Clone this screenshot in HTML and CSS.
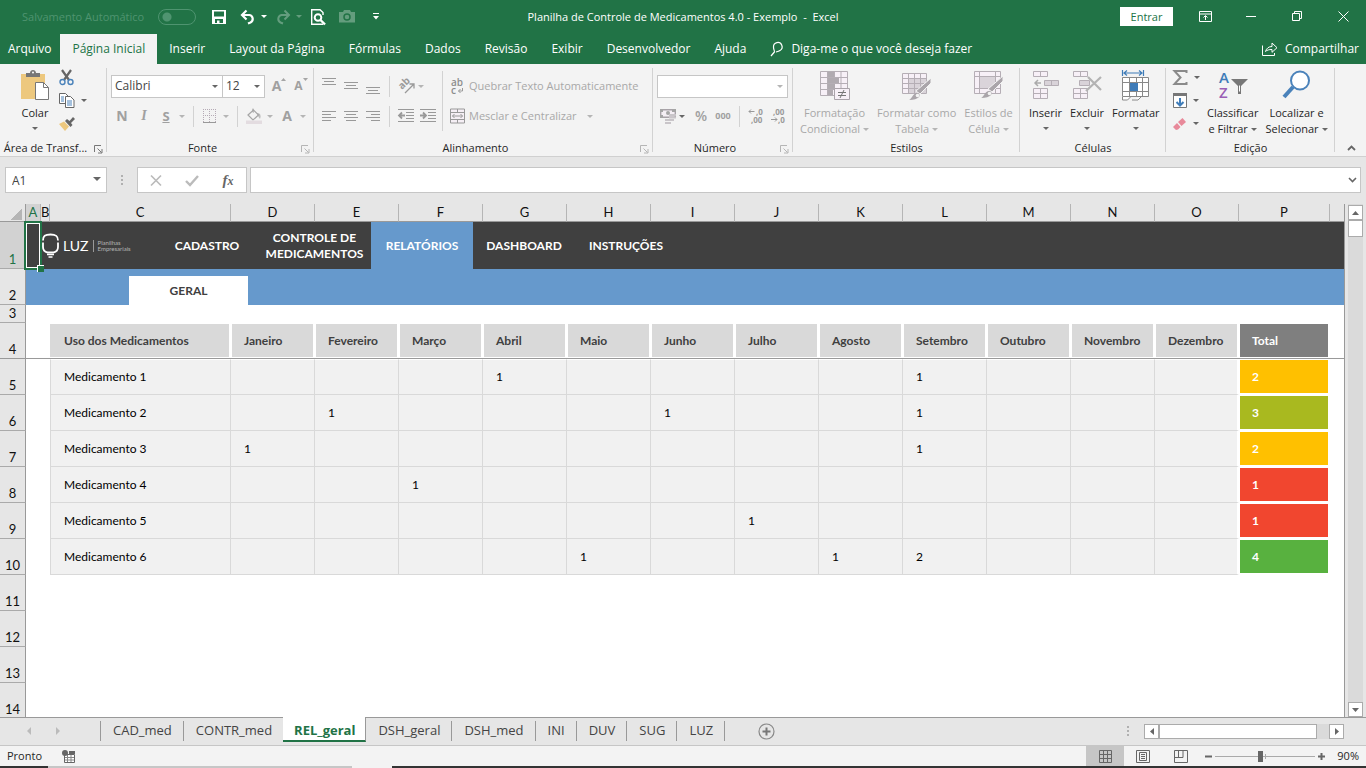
FILE: index.html
```html
<!DOCTYPE html>
<html lang="pt-BR">
<head>
  <meta charset="UTF-8">
  <meta name="viewport" content="width=device-width, initial-scale=1.0">
  <title>Planilha de Controle de Medicamentos 4.0</title>
  <link rel="stylesheet" href="styles.css">
</head>
<body>
  <header class="titlebar">
    <div class="quick">
      <label class="autosave" for="autosave">Salvamento Automático</label>
      <input class="switch" type="checkbox" id="autosave" disabled>
      <button class="q-btn" aria-label="Salvar"><svg width="14" height="14" viewBox="0 0 14 14"><path d="M0 0h14v14H0z" fill="#fff"/><path d="M2 1.500h10v5H2zM3 9h8v4H3z" fill="#217346"/><path d="M5 10.500h2.500V14H5z" fill="#fff"/></svg></button>
      <button class="q-btn" aria-label="Desfazer"><svg width="16" height="14" viewBox="0 0 16 14"><path d="M2 5h7.500a4 4 0 0 1 1 7.500L8 13.500M6.500 0.500L2 5l4.500 4.500" fill="none" stroke="#fff" stroke-width="2.200"/></svg></button>
      <span class="caret white"></span>
      <button class="q-btn dim" aria-label="Refazer"><svg width="16" height="14" viewBox="0 0 16 14"><path d="M14 5H6.500a4 4 0 0 0-1 7.500L8 13.500M9.500 0.500L14 5L9.500 9.500" fill="none" stroke="#fff" stroke-width="2"/></svg></button>
      <span class="caret white dim"></span>
      <button class="q-btn" aria-label="Visualizar impressão"><svg width="15" height="16" viewBox="0 0 15 16"><path d="M12 6V3.500L9 .7H.7v14.600H12" fill="none" stroke="#fff" stroke-width="1.400"/><circle cx="7" cy="8.500" r="3.300" fill="none" stroke="#fff" stroke-width="2"/><path d="M9.500 11l4.500 4.500" stroke="#fff" stroke-width="2.400"/></svg></button>
      <button class="q-btn dim" aria-label="Câmera"><svg width="16" height="13" viewBox="0 0 16 13"><path d="M0 2h4l1-2h6l1 2h4v10.500H0z" fill="#fff"/><circle cx="8" cy="7" r="3" fill="none" stroke="#217346" stroke-width="1.500"/></svg></button>
      <button class="q-btn" aria-label="Personalizar"><svg width="6" height="7" viewBox="0 0 6 7"><path d="M0 .5h6" stroke="#fff"/><path d="M0 3h6L3 6.500z" fill="#fff"/></svg></button>
    </div>
    <h1 class="doc-title">Planilha de Controle de Medicamentos 4.0 - Exemplo&nbsp; -&nbsp; Excel</h1>
    <div class="window">
      <button class="signin">Entrar</button>
      <button class="w-btn" aria-label="Opções da faixa"><svg width="13" height="11" viewBox="0 0 13 11"><path d="M.5 .5h12v10H.5zM.5 3h12M6.500 9V5M4.500 6.500l2-2 2 2" fill="none" stroke="#fff"/></svg></button>
      <button class="w-btn" aria-label="Minimizar"><svg width="11" height="11" viewBox="0 0 11 11"><path d="M0 5.500h10" stroke="#fff"/></svg></button>
      <button class="w-btn" aria-label="Restaurar"><svg width="11" height="11" viewBox="0 0 11 11"><path d="M.5 2.500h7v7h-7zM2.500 2.500v-2h7v7h-2" fill="none" stroke="#fff"/></svg></button>
      <button class="w-btn" aria-label="Fechar"><svg width="11" height="11" viewBox="0 0 11 11"><path d="M.5 .5l10 10M10.500 .5l-10 10" stroke="#fff"/></svg></button>
    </div>
  </header>

  <nav class="menu">
    <a class="file" href="#">Arquivo</a>
    <a class="on" href="#">Página Inicial</a>
    <a href="#">Inserir</a>
    <a href="#">Layout da Página</a>
    <a href="#">Fórmulas</a>
    <a href="#">Dados</a>
    <a href="#">Revisão</a>
    <a href="#">Exibir</a>
    <a href="#">Desenvolvedor</a>
    <a href="#">Ajuda</a>
    <a class="tell" href="#"><svg width="13" height="15" viewBox="0 0 13 15"><path d="M4.500 9.500C4 7.500 3.500 7 3.500 5a4.300 4.300 0 1 1 6.500 3.500c-1 .7-2 1-4 1.500M4.800 9.500L1 14" fill="none" stroke="#fff" stroke-width="1.200"/></svg>Diga-me o que você deseja fazer</a>
    <a class="share" href="#"><svg width="16" height="14" viewBox="0 0 16 14"><path d="M.5 3.500v10h12V11" fill="none" stroke="#fff"/><path d="M3.500 9.500C4.500 6 7 4.500 10 4.500V1l5 4.700-5 4.600V7.500c-3 0-5 .5-6.500 2z" fill="none" stroke="#fff"/></svg>Compartilhar</a>
  </nav>

  <section class="ribbon">
    <div class="group g-clip">
      <div class="tools">
        <button class="big paste"><svg width="30" height="31" viewBox="0 0 30 31"><path d="M1 4h24v25H1z" fill="#edc87e"/><path d="M6 7V3h4c0-4 6-4 6 0h4v4z" fill="#777"/><circle cx="13" cy="2.500" r="1" fill="#fff"/><path d="M15.500 12.500h8l5 5v12h-13z" fill="#fff" stroke="#777"/><path d="M23.500 12.500v5h5" fill="none" stroke="#777"/></svg>Colar<span class="caret"></span></button>
        <div class="stack">
          <button aria-label="Recortar"><svg width="16" height="16" viewBox="0 0 16 16"><path d="M3 0l7 10M12 0L5 10" stroke="#666" stroke-width="2.200"/><circle cx="3.500" cy="12" r="2.500" fill="none" stroke="#4a82ba" stroke-width="1.400"/><circle cx="11.500" cy="12" r="2.500" fill="none" stroke="#4a82ba" stroke-width="1.400"/></svg></button>
          <button aria-label="Copiar"><svg width="16" height="15" viewBox="0 0 16 15"><path d="M.5.500h6l3 3v7h-9z" fill="#fff" stroke="#666"/><path d="M2 4h3M2 6h3M2 8h3" stroke="#4a82ba"/><path d="M6.500 3.500h5l3.500 3.500v7.500H6.500z" fill="#fff" stroke="#666"/><path d="M8 8h5M8 10h5M8 12h5" stroke="#4a82ba"/></svg><span class="caret"></span></button>
          <button aria-label="Pincel de Formatação"><svg width="16" height="14" viewBox="0 0 16 14"><path d="M0 7l5-2.500 5 5L6 14z" fill="#edc87e"/><path d="M6 4l2-2 2.500 2L14 0l2 2-4 4 1.500 2-2 2z" fill="#666"/></svg></button>
        </div>
      </div>
      <div class="caption">Área de Transf...<svg class="launch dark" width="9" height="9" viewBox="0 0 9 9"><path d="M.5 7V.500H7M3.500 3.500l4 4M8 4v4H4" fill="none" stroke="currentColor"/></svg></div>
    </div>

    <div class="group g-font">
      <div class="tools col">
        <div class="row">
          <span class="combo face"><select aria-label="Fonte"><option>Calibri</option></select></span>
          <span class="combo size"><select aria-label="Tamanho"><option>12</option></select></span>
          <button class="ic grow" aria-label="Aumentar fonte"><b>A</b><svg width="5" height="3" viewBox="0 0 5 3"><path d="M0 3l2.500-3L5 3z" fill="#a5a5a5"/></svg></button>
          <button class="ic shrink" aria-label="Diminuir fonte"><b>A</b><svg width="5" height="3" viewBox="0 0 5 3"><path d="M0 0l2.500 3L5 0z" fill="#a5a5a5"/></svg></button>
        </div>
        <div class="row">
          <button class="ic"><b>N</b></button>
          <button class="ic"><i>I</i></button>
          <button class="ic"><u>S</u></button>
          <span class="caret off"></span>
          <span class="sep"></span>
          <button class="ic" aria-label="Bordas"><svg width="14" height="14" viewBox="0 0 14 14"><path d="M.5 0v13M6.500 0v13M12.500 0v13M0 .5h13M0 6.500h13" stroke="#b5aab5" stroke-dasharray="1 1"/><path d="M0 13.500h13" stroke="#999"/></svg></button>
          <span class="caret off"></span>
          <span class="sep"></span>
          <button class="ic" aria-label="Preenchimento"><svg width="16" height="16" viewBox="0 0 16 16"><path d="M2 7l5.500-5 5 5-5.500 5z" fill="none" stroke="#a5a5a5" stroke-width="1.200"/><path d="M6 4V1.500C6 0 8 0 8 1.500V5M11 5c3 0 4.500 2 3 6l-2-3z" fill="#a5a5a5" fill-opacity=".7"/><path d="M0 12.500h16V16H0z" fill="#e3dce0"/></svg></button>
          <span class="caret off"></span>
          <button class="ic" aria-label="Cor da fonte"><b>A</b></button>
          <span class="caret off"></span>
        </div>
      </div>
      <div class="caption">Fonte<svg class="launch" width="9" height="9" viewBox="0 0 9 9"><path d="M.5 7V.500H7M3.500 3.500l4 4M8 4v4H4" fill="none" stroke="currentColor"/></svg></div>
    </div>

    <div class="group g-align">
      <div class="tools">
        <div class="col lines">
          <div class="row">
            <button class="ic top" aria-label="Alinhar em cima"><svg width="14" height="8" viewBox="0 0 14 8"><path d="M0 .5h14M2 3.500h10M0 6.500h14" stroke="#999"/></svg></button>
            <button class="ic" aria-label="Alinhar no meio"><svg width="14" height="8" viewBox="0 0 14 8"><path d="M0 .5h14M2 3.500h10M0 6.500h14" stroke="#999"/></svg></button>
            <button class="ic bottom" aria-label="Alinhar embaixo"><svg width="14" height="8" viewBox="0 0 14 8"><path d="M0 .5h14M2 3.500h10M0 6.500h14" stroke="#999"/></svg></button>
            <span class="sep"></span>
            <button class="ic" aria-label="Orientação"><svg width="17" height="16" viewBox="0 0 17 16"><text transform="translate(4 12) rotate(-45)" font-size="10" font-weight="700" font-family="Open Sans" fill="#9a9a9a">ab</text><path d="M7 15l8.500-8.500M11.500 6H16v4.500" fill="none" stroke="#999" stroke-width="1.300"/></svg></button>
            <span class="caret off"></span>
          </div>
          <div class="row">
            <button class="ic" aria-label="Esquerda"><svg width="14" height="11" viewBox="0 0 14 11"><path d="M0 .5h14M0 3.500h9M0 6.500h14M0 9.500h9" stroke="#999"/></svg></button>
            <button class="ic" aria-label="Centro"><svg width="14" height="11" viewBox="0 0 14 11"><path d="M0 .5h14M2 3.500h10M0 6.500h14M2 9.500h10" stroke="#999"/></svg></button>
            <button class="ic" aria-label="Direita"><svg width="14" height="11" viewBox="0 0 14 11"><path d="M0 .5h14M5 3.500h9M0 6.500h14M5 9.500h9" stroke="#999"/></svg></button>
            <span class="sep"></span>
            <button class="ic" aria-label="Diminuir recuo"><svg width="16" height="14" viewBox="0 0 16 14"><path d="M0 .5h16M8 3.500h8M8 6.500h8M8 9.500h8M0 12.500h16" stroke="#999"/><path d="M7 6.500H1M4 3.500l-3 3 3 3" fill="none" stroke="#999" stroke-width="1.800"/></svg></button>
            <button class="ic" aria-label="Aumentar recuo"><svg width="16" height="14" viewBox="0 0 16 14"><path d="M0 .5h16M8 3.500h8M8 6.500h8M8 9.500h8M0 12.500h16" stroke="#999"/><path d="M0 6.500h6M3 3.500l3 3-3 3" fill="none" stroke="#999" stroke-width="1.800"/></svg></button>
          </div>
        </div>
        <div class="col wide">
          <button class="wordy"><svg width="16" height="17" viewBox="0 0 16 17"><text x="1" y="8" font-size="10" font-weight="600" font-family="Open Sans" fill="#8d8d8d">ab</text><text x="1" y="16" font-size="10" font-weight="600" font-family="Open Sans" fill="#8d8d8d">c</text><path d="M12.500 10v3H8.500M10.500 11l-2 2 2 2" fill="none" stroke="#999"/></svg>Quebrar Texto Automaticamente</button>
          <button class="wordy"><svg width="16" height="16" viewBox="0 0 16 16"><path d="M.5 1h14v14H.5zM.5 4.500h14M.5 11.500h14M7.500 1v3.500M7.500 11.500V15" fill="#f5eff5" stroke="#999"/><path d="M2.500 8h10M4.500 6l-2 2 2 2M10.500 6l2 2-2 2" fill="none" stroke="#999"/></svg>Mesclar e Centralizar<span class="caret off"></span></button>
        </div>
      </div>
      <div class="caption">Alinhamento<svg class="launch" width="9" height="9" viewBox="0 0 9 9"><path d="M.5 7V.500H7M3.500 3.500l4 4M8 4v4H4" fill="none" stroke="currentColor"/></svg></div>
    </div>

    <div class="group g-num">
      <div class="tools col">
        <div class="row"><span class="combo off"><select aria-label="Formato de número"><option></option></select></span></div>
        <div class="row">
          <button class="ic" aria-label="Moeda"><svg width="17" height="16" viewBox="0 0 17 16"><path d="M.7 1.700h14.600v7.600H.7z" fill="#f5eff5" stroke="#a8a2a8" stroke-width="1.400"/><circle cx="8" cy="5" r="2" fill="#a5a5a5"/><path d="M0 1h3v3H0zM12 1h4v3h-4zM0 7h3v3H0z" fill="#a5a5a5"/><path d="M9 7h7M9 9.500h7M5 12h9M5 15h6" stroke="#c9c5c9" stroke-width="2"/></svg></button>
          <span class="caret"></span>
          <button class="ic pct">%</button>
          <button class="ic mil">000</button>
          <span class="sep"></span>
          <button class="ic" aria-label="Aumentar casas"><svg width="16" height="16" viewBox="0 0 16 16"><g font-size="8" font-weight="700" font-family="Open Sans" fill="#9a9a9a"><text x="8" y="7">,0</text><text x="3" y="15">,00</text></g><path d="M6.500 3.500H1M3 1.500l-2 2 2 2" fill="none" stroke="#999"/></svg></button>
          <button class="ic" aria-label="Diminuir casas"><svg width="16" height="16" viewBox="0 0 16 16"><g font-size="8" font-weight="700" font-family="Open Sans" fill="#9a9a9a"><text x="3" y="7">,00</text><text x="8" y="15">,0</text></g><path d="M1 11.500h6M5 9.500l2 2-2 2" fill="none" stroke="#999"/></svg></button>
        </div>
      </div>
      <div class="caption">Número<svg class="launch" width="9" height="9" viewBox="0 0 9 9"><path d="M.5 7V.500H7M3.500 3.500l4 4M8 4v4H4" fill="none" stroke="currentColor"/></svg></div>
    </div>

    <div class="group g-styles">
      <div class="tools">
        <button class="big off"><svg width="30" height="31" viewBox="0 0 30 31"><path d="M.5 1.500h27v24H.5zM.5 7.500h27M.5 13.500h27M.5 19.500h27M7.500 1.500v24M14.500 1.500v24M21 1.500v24" fill="#f7f0f7" stroke="#b5aeb5"/><path d="M8 2h6v5H8zM8 8h11v5H8zM8 14h7v5H8zM8 20h5v5H8z" fill="#b0aab0"/><path d="M14.500 18.500h15v11h-15z" fill="#f7f0f7" stroke="#aaa3aa"/><path d="M18 22.500h8M18 25.500h8M24 20l-4 8" stroke="#777"/></svg>Formatação<br>Condicional<span class="caret off"></span></button>
        <button class="big off"><svg width="30" height="31" viewBox="0 0 30 31"><path d="M.5 3.500h24v20H.5z" fill="#f7f0f7" stroke="#b5aeb5"/><path d="M7 9h17v14H7z" fill="#d9d3d9"/><path d="M.5 8.500h24M.5 13.500h24M.5 18.500h24M6.500 3.500v20M12.500 3.500v20M18.500 3.500v20" stroke="#b5aeb5"/><path d="M29 8v5L18 24l-4-3z" fill="#aaa5aa" stroke="#f3f3f3"/><path d="M7 30c3-1 4-8 9-7 4 2 1 7-9 7z" fill="#aaa5aa"/><circle cx="15.500" cy="25.500" r="1.800" fill="#f3f3f3"/></svg>Formatar como<br>Tabela<span class="caret off"></span></button>
        <button class="big off"><svg width="30" height="31" viewBox="0 0 30 31"><path d="M.5 1.500h26v22H.5zM.5 6.500h26M.5 18.500h26M5.500 1.500v22M21.500 1.500v22" fill="#f7f0f7" stroke="#b5aeb5"/><path d="M6 7h15v11H6z" fill="#dad4da"/><path d="M29 6v5L18 22l-4-3z" fill="#aaa5aa" stroke="#f3f3f3"/><path d="M7 28c3-1 4-8 9-7 4 2 1 7-9 7z" fill="#aaa5aa"/><circle cx="15.500" cy="23.500" r="1.800" fill="#f3f3f3"/></svg>Estilos de<br>Célula<span class="caret off"></span></button>
      </div>
      <div class="caption">Estilos</div>
    </div>

    <div class="group g-cells">
      <div class="tools">
        <button class="big"><svg width="28" height="31" viewBox="0 0 28 31"><path d="M1.500 1.500h14v5h-14zM8.500 1.500v5M1.500 18.500h14v10h-14zM8.500 18.500v10M1.500 23.500h14" fill="#f7f0f7" stroke="#b5aeb5"/><path d="M12.500 10.500h14v5h-14zM19.500 10.500v5" fill="#d9d3d9" stroke="#b5aeb5"/><path d="M9 13H3M6 10l-3 3 3 3" fill="none" stroke="#aaa" stroke-width="1.500"/></svg>Inserir<span class="caret"></span></button>
        <button class="big"><svg width="30" height="31" viewBox="0 0 30 31"><path d="M1.500 1.500h14v5h-14zM8.500 1.500v5M1.500 18.500h14v10h-14zM8.500 18.500v10M1.500 23.500h14" fill="#f7f0f7" stroke="#b5aeb5"/><path d="M7.500 10.500h10v5h-10z" fill="#d9d3d9" stroke="#b5aeb5"/><path d="M16 7l13 13M29 7L14 21" stroke="#b3b3b3" stroke-width="2.200"/></svg>Excluir<span class="caret"></span></button>
        <button class="big"><svg width="30" height="31" viewBox="0 0 30 31"><path d="M1.500 0v6M22.500 0v6M3 3h18M6 .5L3 3l3 2.500M18 .5L21 3l-3 2.500" fill="none" stroke="#3f7cb8" stroke-width="1.200"/><path d="M1.500 7.500h26v19h-26zM1.500 12.500h26M1.500 21.500h26M8.500 7.500v19M15.500 7.500v5M15.500 21.500v5M21.500 7.500v19M1.500 27v3h5l3-3M11 30h6l3-3" fill="#fff" stroke="#888"/><path d="M9 13h8v8H9z" fill="#3f7cb8"/></svg>Formatar<span class="caret"></span></button>
      </div>
      <div class="caption">Células</div>
    </div>

    <div class="group g-edit">
      <div class="tools">
        <div class="stack">
          <button aria-label="Soma"><svg width="15" height="15" viewBox="0 0 15 15"><path d="M13.500 3V1H1.500l6 6.500-6 6.500h12v-2" fill="none" stroke="#8a8a8a" stroke-width="2"/></svg><span class="caret"></span></button>
          <button aria-label="Preencher"><svg width="14" height="15" viewBox="0 0 14 15"><path d="M.5.500h13v14H.5z" fill="#fff" stroke="#777"/><path d="M0 0h14v3H0z" fill="#777"/><path d="M7 5v7M3.500 9L7 12.500 10.500 9" fill="none" stroke="#3f7cb8" stroke-width="2"/></svg><span class="caret"></span></button>
          <button aria-label="Limpar"><svg width="14" height="12" viewBox="0 0 14 12"><path d="M5 4L9.500 0 13 4 8.500 8zM4 5l3.500 4L5 11.500 3 12 0 9z" fill="#e8899a"/></svg><span class="caret"></span></button>
        </div>
        <button class="big"><svg width="30" height="31" viewBox="0 0 30 31"><g font-size="15" font-weight="600" font-family="Open Sans"><text x="1" y="13" fill="#3f7cb8">A</text><text x="1" y="28" fill="#9a5fb5">Z</text></g><path d="M13 9h17l-7 7v8h-3v-8z" fill="#777"/><path d="M21.500 15.500v6" stroke="#fff"/></svg>Classificar<br>e Filtrar<span class="caret"></span></button>
        <button class="big"><svg width="30" height="31" viewBox="0 0 30 31"><circle cx="18" cy="10.500" r="9" fill="#fff" stroke="#4a82ba" stroke-width="2"/><path d="M11 17L2 27" stroke="#4a82ba" stroke-width="4"/></svg>Localizar e<br>Selecionar<span class="caret"></span></button>
      </div>
      <div class="caption">Edição</div>
    </div>
    <button class="collapse" aria-label="Recolher"><svg width="9" height="6" viewBox="0 0 9 6"><path d="M1 5l3.500-3.500L8 5" fill="none" stroke="#666" stroke-width="1.800"/></svg></button>
  </section>

  <section class="formula">
    <span class="combo name"><input type="text" value="A1" aria-label="Caixa de nome"></span>
    <span class="dots"></span>
    <div class="fx">
      <button aria-label="Cancelar"><svg width="12" height="11" viewBox="0 0 12 11"><path d="M1 .5l10 10M11 .5l-10 10" stroke="#bbb" stroke-width="1.700"/></svg></button>
      <button aria-label="Inserir"><svg width="14" height="11" viewBox="0 0 14 11"><path d="M1 6l4 4L13 1" fill="none" stroke="#bbb" stroke-width="2.400"/></svg></button>
      <button aria-label="Inserir função"><em>f</em><em class="x">x</em></button>
    </div>
    <div class="entry">
      <input type="text" aria-label="Barra de fórmulas">
      <svg width="9" height="6" viewBox="0 0 9 6"><path d="M1 1l3.500 3.500L8 1" fill="none" stroke="#666" stroke-width="1.600"/></svg>
    </div>
  </section>

  <main class="work">
    <div class="sheet">
      <table>
        <colgroup>
          <col class="c-num"><col class="c-a"><col class="c-b"><col class="c-c">
          <col class="c-m" span="12"><col class="c-p"><col>
        </colgroup>
        <tr class="letters">
          <th class="corner"></th><th class="sel">A</th><th>B</th><th>C</th><th>D</th><th>E</th><th>F</th><th>G</th><th>H</th><th>I</th><th>J</th><th>K</th><th>L</th><th>M</th><th>N</th><th>O</th><th>P</th><th class="rest"></th>
        </tr>
        <tr class="r1">
          <th class="sel">1</th>
          <td class="cursor"></td>
          <td colspan="16">
            <div class="site-nav">
              <div class="logo">
                <svg width="19" height="26" viewBox="0 0 19 26"><path d="M2 7.500C2 3 4 1.500 9.500 1.500S17 3 17 7.500M2 9.500V14c0 3.500 2 5 4.500 5.500h6c2.500-.5 4.500-2 4.500-5.500V9.500" fill="none" stroke="#fff" stroke-width="1.800"/><path d="M6 21.500h7M7.500 24h4" stroke="#fff" stroke-width="1.600"/></svg>
                <span class="luz">LUZ</span>
                <span class="tag">Planilhas<br>Empresariais</span>
              </div>
              <a href="#">CADASTRO</a>
              <a class="long" href="#">CONTROLE DE MEDICAMENTOS</a>
              <a class="on" href="#">RELATÓRIOS</a>
              <a href="#">DASHBOARD</a>
              <a href="#">INSTRUÇÕES</a>
            </div>
          </td>
        </tr>
        <tr class="r2"><th>2</th><td colspan="17"><a class="sub" href="#">GERAL</a></td></tr>
        <tr class="r3"><th>3</th><td colspan="17"></td></tr>
        <tr class="head">
          <th>4</th><td></td><td></td><td class="h name">Uso dos Medicamentos</td><td class="h">Janeiro</td><td class="h">Fevereiro</td><td class="h">Março</td><td class="h">Abril</td><td class="h">Maio</td><td class="h">Junho</td><td class="h">Julho</td><td class="h">Agosto</td><td class="h">Setembro</td><td class="h">Outubro</td><td class="h">Novembro</td><td class="h">Dezembro</td><td class="h total">Total</td><td></td>
        </tr>
        <tr class="data first"><th>5</th><td></td><td></td><td class="d name">Medicamento 1</td><td class="d"></td><td class="d"></td><td class="d"></td><td class="d">1</td><td class="d"></td><td class="d"></td><td class="d"></td><td class="d"></td><td class="d">1</td><td class="d"></td><td class="d"></td><td class="d last"></td><td class="t yellow">2</td><td></td></tr>
        <tr class="data"><th>6</th><td></td><td></td><td class="d name">Medicamento 2</td><td class="d"></td><td class="d">1</td><td class="d"></td><td class="d"></td><td class="d"></td><td class="d">1</td><td class="d"></td><td class="d"></td><td class="d">1</td><td class="d"></td><td class="d"></td><td class="d last"></td><td class="t olive">3</td><td></td></tr>
        <tr class="data"><th>7</th><td></td><td></td><td class="d name">Medicamento 3</td><td class="d">1</td><td class="d"></td><td class="d"></td><td class="d"></td><td class="d"></td><td class="d"></td><td class="d"></td><td class="d"></td><td class="d">1</td><td class="d"></td><td class="d"></td><td class="d last"></td><td class="t yellow">2</td><td></td></tr>
        <tr class="data"><th>8</th><td></td><td></td><td class="d name">Medicamento 4</td><td class="d"></td><td class="d"></td><td class="d">1</td><td class="d"></td><td class="d"></td><td class="d"></td><td class="d"></td><td class="d"></td><td class="d"></td><td class="d"></td><td class="d"></td><td class="d last"></td><td class="t red">1</td><td></td></tr>
        <tr class="data"><th>9</th><td></td><td></td><td class="d name">Medicamento 5</td><td class="d"></td><td class="d"></td><td class="d"></td><td class="d"></td><td class="d"></td><td class="d"></td><td class="d">1</td><td class="d"></td><td class="d"></td><td class="d"></td><td class="d"></td><td class="d last"></td><td class="t red">1</td><td></td></tr>
        <tr class="data"><th>10</th><td></td><td></td><td class="d name">Medicamento 6</td><td class="d"></td><td class="d"></td><td class="d"></td><td class="d"></td><td class="d">1</td><td class="d"></td><td class="d"></td><td class="d">1</td><td class="d">2</td><td class="d"></td><td class="d"></td><td class="d last"></td><td class="t green">4</td><td></td></tr>
        <tr><th>11</th><td colspan="17"></td></tr>
        <tr><th>12</th><td colspan="17"></td></tr>
        <tr><th>13</th><td colspan="17"></td></tr>
        <tr><th>14</th><td colspan="17"></td></tr>
      </table>
    </div>
    <div class="vscroll">
      <button aria-label="Acima"><svg width="7" height="4" viewBox="0 0 7 4"><path d="M0 4l3.500-4L7 4z" fill="#666"/></svg></button>
      <div class="thumb"></div>
      <button class="end" aria-label="Abaixo"><svg width="7" height="4" viewBox="0 0 7 4"><path d="M0 0l3.500 4L7 0z" fill="#666"/></svg></button>
    </div>
  </main>

  <nav class="tabs">
    <div class="arrows"><svg width="4" height="8" viewBox="0 0 4 8"><path d="M4 0v8L0 4z" fill="#bbb"/></svg><svg width="4" height="8" viewBox="0 0 4 8"><path d="M0 0v8l4-4z" fill="#bbb"/></svg></div>
    <a href="#">CAD_med</a>
    <a href="#">CONTR_med</a>
    <a class="on" href="#">REL_geral</a>
    <a href="#">DSH_geral</a>
    <a href="#">DSH_med</a>
    <a href="#">INI</a>
    <a href="#">DUV</a>
    <a href="#">SUG</a>
    <a href="#">LUZ</a>
    <button class="add" aria-label="Nova planilha"><svg width="17" height="17" viewBox="0 0 17 17"><circle cx="8.500" cy="8.500" r="7.500" fill="none" stroke="#888" stroke-width="1.200"/><path d="M8.500 4.500v8M4.500 8.500h8" stroke="#777" stroke-width="2"/></svg></button>
    <span class="dots"></span>
    <div class="hscroll">
      <button aria-label="Esquerda"><svg width="4" height="7" viewBox="0 0 4 7"><path d="M4 0v7L0 3.500z" fill="#666"/></svg></button>
      <div class="thumb"></div>
      <button class="end" aria-label="Direita"><svg width="4" height="7" viewBox="0 0 4 7"><path d="M0 0v7l4-3.500z" fill="#666"/></svg></button>
    </div>
  </nav>

  <footer class="status">
    <span class="ready">Pronto</span>
    <svg width="14" height="13" viewBox="0 0 14 13"><path d="M2.500 4.500h10v8h-10z" fill="#fff" stroke="#666"/><path d="M7 1h6v3H7z" fill="#666"/><path d="M3 7.500h9M3 10h9M5.500 5v7M9 5v7" stroke="#888"/><circle cx="3" cy="3" r="3" fill="#666"/></svg>
    <div class="views">
      <button class="on" aria-label="Normal"><svg width="13" height="13" viewBox="0 0 13 13"><path d="M.5.500h12v12H.5zM.5 4.500h12M.5 8.500h12M4.500.500v12M8.500.500v12" fill="none" stroke="#666"/></svg></button>
      <button aria-label="Layout da Página"><svg width="14" height="13" viewBox="0 0 14 13"><path d="M.5.500h13v12H.5zM3.500 2.500h7v8h-7zM5 4.500h4M5 6.500h4M5 8.500h4" fill="none" stroke="#666"/></svg></button>
      <button aria-label="Quebra de Página"><svg width="14" height="13" viewBox="0 0 14 13"><path d="M.5.500h13v12H.5zM4.500.500v7M.5 7.500h8.500V.500" fill="none" stroke="#666"/></svg></button>
    </div>
    <button class="step" aria-label="Menos zoom"><svg width="7" height="7" viewBox="0 0 7 7"><path d="M0 3.500h7" stroke="#666" stroke-width="2"/></svg></button>
    <input class="zoom" type="range" min="0" max="100" value="45" aria-label="Zoom">
    <button class="step" aria-label="Mais zoom"><svg width="7" height="7" viewBox="0 0 7 7"><path d="M0 3.500h7M3.500 0v7" stroke="#666" stroke-width="2"/></svg></button>
    <span class="percent">90%</span>
  </footer>
</body>
</html>
```
FILE: styles.css
```css
* {
  box-sizing: border-box;
}
body {
  margin: 0;
  height: 100vh;
  display: flex;
  flex-direction: column;
  overflow: hidden;
  background: #e6e6e6;
  color: #262626;
  font: 11px/16px "Open Sans", "Noto Sans", sans-serif;
}
button, input, select {
  font: inherit;
  color: inherit;
  margin: 0;
  padding: 0;
  border: 0;
  border-radius: 0;
  background: none;
}
a {
  color: inherit;
  text-decoration: none;
}
svg {
  display: block;
  flex: none;
  overflow: visible;
}
.caret {
  flex: none;
  display: inline-block;
  border: 3px solid transparent;
  border-top-color: #666;
  border-bottom: 0;
}
.caret.off {
  border-top-color: #b5b5b5;
}
.caret.white {
  border-top-color: #fff;
}
.dim {
  opacity: .3;
}

/* title bar */
.titlebar {
  flex: none;
  height: 33px;
  display: grid;
  grid-template-columns: 1fr auto 1fr;
  align-items: center;
  background: #217346;
  color: #fff;
}
.quick {
  display: flex;
  align-items: center;
  padding-left: 22px;
}
.autosave {
  color: #4f9470;
  width: 136px;
  white-space: nowrap;
}
.switch {
  appearance: none;
  width: 38px;
  height: 16px;
  border: 1px solid #4f9470;
  border-radius: 8px;
  margin-right: 12px;
  background: radial-gradient(circle at 8px 7px, #4f9470 4px, transparent 5px);
}
.q-btn {
  width: 22px;
  margin-right: 7px;
  display: flex;
  justify-content: center;
}
.q-btn + .caret {
  margin: 0 5px 0 -5px;
}
.doc-title {
  margin: 0;
  font-size: 11px;
  font-weight: 400;
}
.window {
  display: flex;
  align-items: center;
  justify-content: flex-end;
}
.signin {
  width: 53px;
  height: 19px;
  background: #fff;
  color: #217346;
  margin-right: 9px;
}
.w-btn {
  width: 46px;
  display: flex;
  justify-content: center;
}

.menu {
  flex: none;
  height: 31px;
  padding-top: 1px;
  display: flex;
  background: #217346;
  color: #fff;
  font-size: 12px;
}
.menu a {
  display: flex;
  align-items: center;
  padding: 0 12px;
  white-space: nowrap;
}
.menu .file {
  padding: 0 9px 0 8px;
}
.menu .on {
  background: #f3f3f3;
  color: #217346;
}
.menu .tell {
  gap: 8px;
}
.menu .share {
  margin-left: auto;
  padding-right: 7px;
  gap: 7px;
}

/* ribbon */
.ribbon {
  flex: none;
  height: 93px;
  display: flex;
  background: #f3f3f3;
  border-bottom: 1px solid #d0d0d0;
}
.group {
  flex: none;
  display: flex;
  flex-direction: column;
  position: relative;
}
.group::after {
  content: '';
  position: absolute;
  right: 0;
  top: 4px;
  bottom: 4px;
  border-right: 1px solid #d2d2d2;
}
.g-clip { width: 107px; }
.g-font { width: 207px; }
.g-align { width: 339px; }
.g-num { width: 140px; }
.g-styles { width: 227px; }
.g-cells { width: 146px; }
.g-edit { width: 169px; }
.tools {
  flex: 1;
  display: flex;
}
.col {
  display: flex;
  flex-direction: column;
  padding-top: 7px;
}
.caption {
  height: 16px;
  text-align: center;
  position: relative;
  padding-right: 16px;
}
.launch {
  position: absolute;
  right: 4px;
  top: 5px;
  color: #b5b5b5;
}
.launch.dark {
  color: #777;
}
.big {
  display: block;
  text-align: center;
  line-height: 16px;
  padding-top: 6px;
  white-space: nowrap;
}
.big svg {
  margin: 0 auto 4px;
}
.big .caret {
  margin-left: 3px;
  vertical-align: 2px;
}
.big.off, .wordy {
  color: #a8a8a8;
}
.tools > .big {
  align-self: flex-start;
}
.g-clip .big, .g-cells .big {
  display: flex;
  flex-direction: column;
  align-items: center;
}
.g-clip .big .caret, .g-cells .big .caret {
  margin: 6px 0 0;
}
.g-clip .big {
  width: 44px;
  margin-left: 13px;
}
.stack button {
  height: 23px;
  display: flex;
  align-items: center;
  gap: 6px;
}
.stack {
  padding: 2px 0 0 2px;
}
.row {
  display: flex;
  align-items: center;
  height: 30px;
}
.ic {
  width: 22px;
  height: 24px;
  flex: none;
  display: flex;
  align-items: center;
  justify-content: center;
  color: #a0a0a0;
}
.ic b {
  font-size: 14px;
}
.ic i {
  font: italic bold 14px "Liberation Serif", serif;
}
.ic u {
  font-size: 13px;
  font-weight: 700;
}
.ic.top { padding-bottom: 9px; }
.ic.bottom { padding-top: 9px; }
.sep {
  height: 21px;
  border-left: 1px solid #d2d2d2;
  margin: 0 5px;
}
.combo {
  position: relative;
  display: block;
  height: 23px;
  background: #fff;
  border: 1px solid #c6c6c6;
  font-size: 12px;
}
.combo select, .combo input {
  appearance: none;
  width: 100%;
  height: 100%;
  padding-left: 3px;
  color: #444;
}
.combo::after {
  content: '';
  position: absolute;
  right: 4px;
  top: 9px;
  border: 3px solid transparent;
  border-top-color: #666;
  border-bottom: 0;
}
.combo.off::after {
  border-top-color: #b5b5b5;
}
.g-font .col {
  padding-left: 4px;
}
.g-font .col .caret {
  margin: 0 3px 0 2px;
}
.face { width: 112px; }
.size {
  width: 43px;
  margin-left: -1px;
}
.grow { margin-left: 3px; }
.grow svg, .shrink svg {
  align-self: flex-start;
  margin-top: 4px;
}
.shrink b {
  font-size: 12px;
}
.lines {
  width: 128px;
  padding-left: 4px;
}
.lines .ic + .caret {
  margin-left: 1px;
}
.wide {
  margin-top: 7px;
  padding: 0 0 0 7px;
  height: 60px;
  border-left: 1px solid #d2d2d2;
}
.wordy {
  height: 30px;
  display: flex;
  align-items: center;
  gap: 3px;
  white-space: nowrap;
}
.wordy .caret {
  margin-left: 7px;
}
.g-num .col {
  padding-left: 4px;
}
.g-num .combo { width: 131px; }
.pct {
  margin-left: 5px;
  font-size: 14px;
  font-weight: 600;
}
.mil {
  font-size: 9px;
  font-weight: 700;
}
.g-styles .tools {
  gap: 8px;
  padding-left: 7px;
}
.g-edit .tools {
  gap: 7px;
  padding-left: 5px;
}
.g-cells .tools {
  gap: 8px;
  padding-left: 9px;
}
.g-styles .caption, .g-cells .caption, .g-edit .caption {
  padding-right: 0;
}
.collapse {
  margin: auto 0 5px auto;
  padding-right: 10px;
}

/* formula bar */
.formula {
  flex: none;
  height: 47px;
  display: flex;
  padding: 10px 5px 11px;
}
.formula .combo {
  height: 26px;
  width: 102px;
}
.formula .combo::after {
  right: 5px;
  border-width: 4px 4px 0;
}
.formula .combo input {
  padding-left: 6px;
}
.dots {
  width: 2px;
  height: 11px;
  align-self: center;
  background: repeating-linear-gradient(#b0b0b0 0 2px, transparent 2px 4px);
}
.formula .dots {
  margin: 0 14px;
}
.fx {
  height: 26px;
  width: 110px;
  display: flex;
  background: #fff;
  border: 1px solid #c6c6c6;
}
.fx button {
  flex: 1;
  display: flex;
  align-items: center;
  justify-content: center;
}
.fx em {
  font: italic bold 15px "Liberation Serif", serif;
  color: #666;
}
.fx .x {
  font-size: 12px;
  padding-top: 3px;
}
.entry {
  flex: 1;
  height: 26px;
  margin-left: 3px;
  display: flex;
  align-items: center;
  padding-right: 3px;
  background: #fff;
  border: 1px solid #c6c6c6;
}
.entry input {
  flex: 1;
}

/* sheet */
.work {
  flex: 1;
  min-height: 0;
  display: flex;
}
.sheet {
  flex: 1;
  min-width: 0;
  overflow: hidden;
  border-right: 1px solid #999;
  background: #fff;
  font-family: Lato, "Open Sans", sans-serif;
  font-size: 12px;
}
table {
  width: 100%;
  table-layout: fixed;
  border-collapse: separate;
  border-spacing: 0;
}
.c-num { width: 26px; }
.c-a { width: 15px; }
.c-b { width: 9px; }
.c-c { width: 181px; }
.c-m { width: 84px; }
.c-p { width: 91px; }
tr {
  height: 36px;
}
td, th {
  padding: 0;
}
th {
  padding-bottom: 1px;
  background: #e6e6e6;
  color: #111;
  font-size: 13px;
  line-height: 16px;
  font-weight: 400;
  vertical-align: bottom;
  border-right: 1px solid #999;
  border-bottom: 1px solid #aaa;
}
.letters {
  height: 18px;
}
.letters th {
  border-color: #999;
  border-right-color: #b5b5b5;
}
.letters .corner {
  border-right-color: #999;
  background: linear-gradient(135deg, transparent 50%, #b5b5b5 50%) 11px 5px / 11px 11px no-repeat #e6e6e6;
}
.letters .rest {
  border-right: 0;
}
th.sel, .letters .sel {
  background: #d2d2d2;
  color: #217346;
}
.r1 {
  height: 47px;
}
.r1 td {
  background: #404040;
}
.cursor {
  position: relative;
}
.cursor::before {
  content: '';
  position: absolute;
  z-index: 1;
  inset: -1px -1px -1px -2px;
  border: 2px solid #217346;
  box-shadow: inset 0 0 0 1px #fff;
}
.cursor::after {
  content: '';
  position: absolute;
  z-index: 2;
  right: -3px;
  bottom: -3px;
  width: 6px;
  height: 6px;
  background: #217346;
  border: 1px solid #fff;
  border-right: 0;
  border-bottom: 0;
}
.site-nav {
  height: 47px;
  display: flex;
  color: #fff;
  font-weight: 700;
  line-height: 16px;
}
.site-nav a {
  width: 102px;
  display: flex;
  align-items: center;
  justify-content: center;
  text-align: center;
}
.site-nav .long {
  width: 113px;
}
.site-nav .on {
  background: #6699cc;
}
.logo {
  width: 115px;
  display: flex;
  align-items: center;
}
.luz {
  font-size: 14px;
  font-weight: 400;
  padding: 0 4px 0 3px;
}
.tag {
  border-left: 1px solid #999;
  padding-left: 4px;
  color: #b5b5b5;
  font-size: 6px;
  line-height: 6px;
  font-weight: 400;
}
.r2 td {
  background: #6699cc;
  vertical-align: bottom;
}
.sub {
  display: block;
  width: 119px;
  height: 29px;
  margin-left: 103px;
  background: #fff;
  color: #404040;
  font-weight: 700;
  line-height: 29px;
  text-align: center;
}
.r3 {
  height: 18px;
}
.head td, .head th {
  border-bottom: 1px solid #999;
}
.h {
  padding-left: 13px;
  background: #d9d9d9;
  color: #404040;
  font-weight: 700;
  white-space: nowrap;
  box-shadow: inset 1px 1px #fff, inset -2px -1px #fff;
}
.h.name {
  padding-left: 14px;
  box-shadow: inset 0 1px #fff, inset -2px -1px #fff;
}
.total {
  background: #7f7f7f;
  color: #fff;
}
.d {
  padding-left: 13px;
  background: #f1f1f1;
  color: #000;
  border-right: 1px solid #d9d9d9;
  border-bottom: 1px solid #d9d9d9;
}
.d.name {
  border-left: 1px solid #d9d9d9;
}
.d.last {
  border-right: 2px solid #fff;
}
.first .d {
  border-top: 1px solid #fff;
}
.t {
  padding-left: 13px;
  color: #fff;
  font-weight: 700;
  box-shadow: inset 1px 1px #fff, inset -2px -2px #fff;
}
.yellow { background: #ffc000; }
.olive { background: #a9b91f; }
.red { background: #f1462f; }
.green { background: #58b13f; }

.vscroll {
  width: 21px;
  padding: 1px 3px 0 3px;
  display: flex;
  flex-direction: column;
  background: linear-gradient(#dadada, #dadada) 3px 0 / 15px 100% no-repeat;
}
.vscroll button, .hscroll button {
  width: 15px;
  height: 15px;
  flex: none;
  display: flex;
  align-items: center;
  justify-content: center;
  background: #fff;
  border: 1px solid #ababab;
}
.thumb {
  background: #fff;
  border: 1px solid #ababab;
}
.vscroll .thumb {
  height: 17px;
  width: 15px;
}
.vscroll .end {
  margin-top: auto;
}

/* sheet tabs */
.tabs {
  flex: none;
  height: 28px;
  display: flex;
  align-items: flex-start;
  border-top: 1px solid #999;
  color: #444;
  font-size: 13px;
}
.arrows {
  width: 100px;
  height: 26px;
  display: flex;
  align-items: center;
  gap: 25px;
  padding-left: 27px;
}
.tabs a {
  height: 20px;
  margin-top: 3px;
  line-height: 18px;
  padding: 0 11px 0 12px;
  border-right: 1px solid #999;
  white-space: nowrap;
}
.arrows + a {
  border-left: 1px solid #999;
}
.tabs .on {
  height: 25px;
  margin: -1px 0 0 -1px;
  padding: 4px 10px 0 11px;
  background: #fff;
  color: #217346;
  font-weight: 700;
  border-bottom: 2px solid #217346;
}
.add {
  margin: 5px 0 0 33px;
}
.tabs .dots {
  margin: 0 15px 0 auto;
}
.hscroll {
  width: 200px;
  margin: 6px 22px 0 0;
  display: flex;
  background: #dadada;
}
.hscroll .thumb {
  width: 158px;
}
.hscroll .end {
  margin-left: auto;
}

/* status bar */
.status {
  flex: none;
  height: 23px;
  display: flex;
  align-items: center;
  padding: 0 7px 2px;
  background: linear-gradient(90deg, #333 48px, #c6c6c6 48px 352px, #f3f3f3 352px 392px, #333 392px) 0 100% / 100% 2px no-repeat #f3f3f3;
  border-top: 1px solid #c6c6c6;
}
.ready {
  width: 55px;
}
.views {
  margin-left: auto;
  display: flex;
  height: 100%;
}
.views button {
  width: 38px;
  display: flex;
  align-items: center;
  justify-content: center;
}
.views .on {
  background: #c6c6c6;
}
.step {
  padding: 0 2px;
}
.views + .step {
  margin-left: 3px;
}
.zoom {
  appearance: none;
  width: 100px;
  height: 12px;
  margin: 0 1px;
  background: linear-gradient(#aaa, #aaa) 0 50% / 100% 1px no-repeat, linear-gradient(#aaa, #aaa) 50% 50% / 1px 5px no-repeat;
}
.zoom::-webkit-slider-thumb {
  appearance: none;
  width: 5px;
  height: 11px;
  background: #666;
}
.percent {
  width: 32px;
  text-align: right;
}
```
